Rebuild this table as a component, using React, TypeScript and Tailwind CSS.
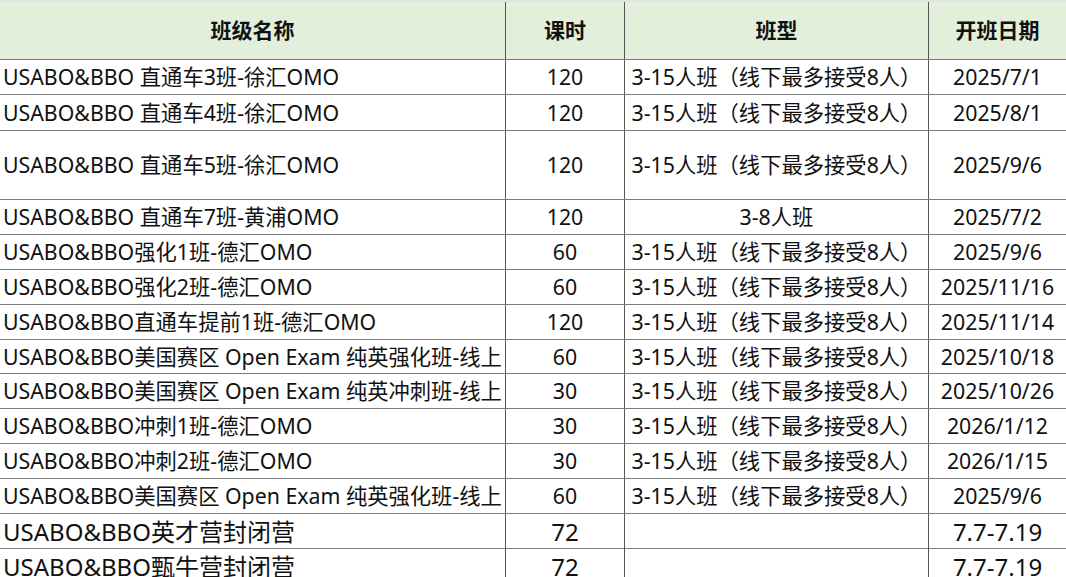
const rows: { name: string; hours: string; type: string; date: string; h: string; big?: boolean }[] = [
  { name: "USABO&BBO 直通车3班-徐汇OMO", hours: "120", type: "3-15人班（线下最多接受8人）", date: "2025/7/1", h: "h-[35px]" },
  { name: "USABO&BBO 直通车4班-徐汇OMO", hours: "120", type: "3-15人班（线下最多接受8人）", date: "2025/8/1", h: "h-[36px]" },
  { name: "USABO&BBO 直通车5班-徐汇OMO", hours: "120", type: "3-15人班（线下最多接受8人）", date: "2025/9/6", h: "h-[69px]" },
  { name: "USABO&BBO 直通车7班-黄浦OMO", hours: "120", type: "3-8人班", date: "2025/7/2", h: "h-[35px]" },
  { name: "USABO&BBO强化1班-德汇OMO", hours: "60", type: "3-15人班（线下最多接受8人）", date: "2025/9/6", h: "h-[35px]" },
  { name: "USABO&BBO强化2班-德汇OMO", hours: "60", type: "3-15人班（线下最多接受8人）", date: "2025/11/16", h: "h-[35px]" },
  { name: "USABO&BBO直通车提前1班-德汇OMO", hours: "120", type: "3-15人班（线下最多接受8人）", date: "2025/11/14", h: "h-[35px]" },
  { name: "USABO&BBO美国赛区 Open Exam 纯英强化班-线上", hours: "60", type: "3-15人班（线下最多接受8人）", date: "2025/10/18", h: "h-[34px]" },
  { name: "USABO&BBO美国赛区 Open Exam 纯英冲刺班-线上", hours: "30", type: "3-15人班（线下最多接受8人）", date: "2025/10/26", h: "h-[35px]" },
  { name: "USABO&BBO冲刺1班-德汇OMO", hours: "30", type: "3-15人班（线下最多接受8人）", date: "2026/1/12", h: "h-[35px]" },
  { name: "USABO&BBO冲刺2班-德汇OMO", hours: "30", type: "3-15人班（线下最多接受8人）", date: "2026/1/15", h: "h-[35px]" },
  { name: "USABO&BBO美国赛区 Open Exam 纯英强化班-线上", hours: "60", type: "3-15人班（线下最多接受8人）", date: "2025/9/6", h: "h-[35px]" },
  { name: "USABO&BBO英才营封闭营", hours: "72", type: "", date: "7.7-7.19", h: "h-[35px]", big: true },
  { name: "USABO&BBO甄牛营封闭营", hours: "72", type: "", date: "7.7-7.19", h: "h-[35px]", big: true },
];

const cols = "grid grid-cols-[506px_119px_304px_137px]";

export default function App() {
  return (
    <div
      className="w-[1066px] h-[577px] overflow-hidden bg-white text-[#111]"
      style={{ fontFamily: '"Noto Sans", "Noto Sans CJK SC", sans-serif' }}
    >
      <div className="h-[2px] bg-[#e3e3e3]" />
      {/* Header */}
      <div className={`${cols} h-[58px] bg-[#e2efda] border-b border-[#7a7a7a] font-bold text-[21px]`}>
        <div className="flex items-center justify-center border-r border-[#555]">班级名称</div>
        <div className="flex items-center justify-center border-r border-[#555]">课时</div>
        <div className="flex items-center justify-center border-r border-[#555]">班型</div>
        <div className="flex items-center justify-center">开班日期</div>
      </div>

      {rows.map((r, i) => (
        <div
          key={i}
          className={`${cols} ${r.h} border-b border-[#7a7a7a] ${r.big ? "text-[24px]" : "text-[21.3px]"}`}
        >
          <div className="flex items-center pl-[3px] border-r border-[#555] whitespace-nowrap">{r.name}</div>
          <div className="flex items-center justify-center border-r border-[#555]">{r.hours}</div>
          <div className="flex items-center justify-center border-r border-[#555] whitespace-nowrap text-[21.3px]">{r.type}</div>
          <div className="flex items-center justify-center">{r.date}</div>
        </div>
      ))}
    </div>
  );
}
